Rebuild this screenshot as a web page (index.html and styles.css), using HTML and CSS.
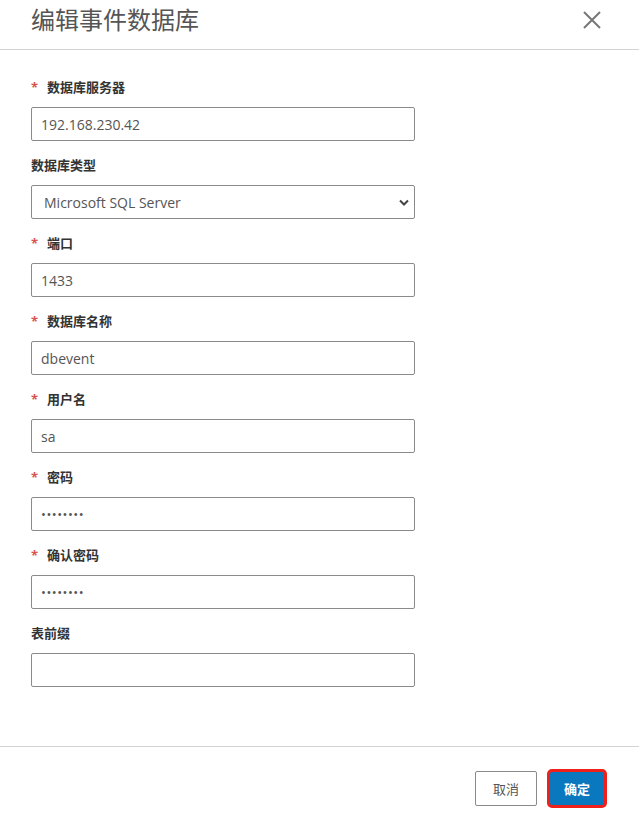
FILE: index.html
```html
<!DOCTYPE html>
<html lang="zh-CN">
<head>
    <meta charset="UTF-8">
    <title>编辑事件数据库</title>
    <link rel="stylesheet" href="styles.css">
</head>
<body>
    <div class="modal">
        <div class="modal-header">
            <h1>编辑事件数据库</h1>
            <button class="close" aria-label="关闭">
                <svg width="18" height="18" viewBox="0 0 18 18"><path d="M1 1L17 17M17 1L1 17" stroke="#777" stroke-width="2" fill="none"/></svg>
            </button>
        </div>

        <form class="modal-body">
            <div class="form-group">
                <label class="required">数据库服务器</label>
                <input type="text" value="192.168.230.42">
            </div>
            <div class="form-group">
                <label>数据库类型</label>
                <div class="select">
                    <span>Microsoft SQL Server</span>
                    <svg width="10" height="7" viewBox="0 0 10 7"><path d="M1 1.5L5 5.5L9 1.5" stroke="#444" stroke-width="2" fill="none"/></svg>
                </div>
            </div>
            <div class="form-group">
                <label class="required">端口</label>
                <input type="text" value="1433">
            </div>
            <div class="form-group">
                <label class="required">数据库名称</label>
                <input type="text" value="dbevent">
            </div>
            <div class="form-group">
                <label class="required">用户名</label>
                <input type="text" value="sa">
            </div>
            <div class="form-group">
                <label class="required">密码</label>
                <input type="password" value="12345678">
            </div>
            <div class="form-group">
                <label class="required">确认密码</label>
                <input type="password" value="12345678">
            </div>
            <div class="form-group">
                <label>表前缀</label>
                <input type="text" value="">
            </div>
        </form>

        <div class="modal-footer">
            <button class="btn">取消</button>
            <button class="btn btn-primary">确定</button>
        </div>
    </div>
</body>
</html>
```

FILE: styles.css
```css
body {
    margin: 0;
    font-family: 'Open Sans', 'Noto Sans CJK SC', sans-serif;
    background: #fff;
    color: #333;
}
.modal {
    width: 639px;
}
.modal-header {
    display: flex;
    align-items: center;
    justify-content: space-between;
    padding: 4px 31px 13px 31px;
    border-bottom: 1px solid #d4d4d4;
}
.modal-header h1 {
    margin: 0;
    font-size: 24px;
    line-height: 32px;
    font-weight: normal;
    color: #555;
}
.close {
    border: none;
    background: none;
    padding: 0;
    margin-right: 7px;
    height: 18px;
    cursor: pointer;
}
.modal-body {
    padding: 27px 31px 45px 31px;
}
.form-group {
    margin-bottom: 14px;
}
label {
    display: block;
    font-size: 13px;
    line-height: 20px;
    font-weight: bold;
    color: #333;
    margin-bottom: 10px;
}
label.required::before {
    content: "*";
    color: #d9534f;
    margin-right: 9px;
    font-weight: bold;
}
input,
.select {
    box-sizing: border-box;
    width: 384px;
    height: 34px;
    padding: 0 9px;
    border: 1px solid #8a8a8a;
    border-radius: 2px;
    font-family: 'Open Sans', 'Noto Sans CJK SC', sans-serif;
    font-size: 14px;
    color: #555;
    outline: none;
}
input[type="password"] {
    font-size: 13px;
    letter-spacing: 0.5px;
}
.select {
    display: flex;
    align-items: center;
    justify-content: space-between;
    padding: 0 5px 0 12px;
}
.modal-footer {
    display: flex;
    justify-content: flex-end;
    padding: 24px 34px 16px 0;
    border-top: 1px solid #d4d4d4;
}
.btn {
    height: 35px;
    width: 62px;
    padding: 0;
    border: 1px solid #8a8a8a;
    background: #fff;
    color: #555;
    font-family: 'Open Sans', 'Noto Sans CJK SC', sans-serif;
    font-size: 13px;
    border-radius: 2px;
    cursor: pointer;
}
.btn-primary {
    margin-left: 12px;
    width: 56px;
    background: #0a78be;
    border-color: #0a78be;
    color: #fff;
    font-weight: bold;
    outline: 3px solid #f0201a;
    outline-offset: -1px;
    border-radius: 3px;
}
```
